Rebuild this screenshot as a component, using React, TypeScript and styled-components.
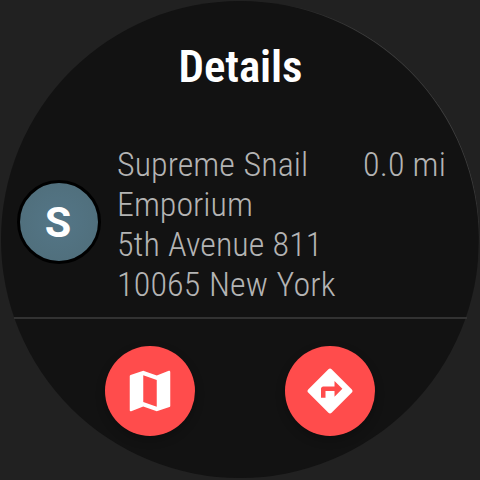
import React from "react";
import styled, { createGlobalStyle } from "styled-components";
import { MdMap } from "react-icons/md";

const GlobalStyle = createGlobalStyle`
  body { margin: 0; background: #212121; }
`;

const Screen = styled.div`
  width: 480px;
  height: 480px;
  box-sizing: border-box;
  padding: 1px;
  background: #212121;
  overflow: hidden;
  font-family: "Roboto Condensed", Roboto, sans-serif;
  font-stretch: 75%;
`;

const Face = styled.main`
  position: relative;
  width: 478px;
  height: 477px;
  border-radius: 50%;
  background: #121212;
  display: flex;
  flex-direction: column;

  /* faint highlight along the upper right of the bezel */
  &::after {
    content: "";
    position: absolute;
    inset: 0 -0.5px 0 0;
    border: 1px solid transparent;
    border-right-color: rgba(255, 255, 255, 0.12);
    border-radius: 50%;
    transform: rotate(-36deg);
    mask-image: radial-gradient(circle at 100% 50%, #000 90px, transparent 180px);
    pointer-events: none;
  }
`;

const Title = styled.h1`
  margin: 0;
  padding: 38px 0 0 1px;
  height: 103px;
  line-height: 56px;
  font-size: 45px;
  font-weight: 600;
  letter-spacing: -0.1px;
  text-align: center;
  color: #fff;
`;

const Place = styled.section`
  display: flex;
  height: 175px;
`;

const Divider = styled.hr`
  width: 453px;
  height: 2px;
  margin: 0 auto;
  border: 0;
  background: #323232;
`;

const Avatar = styled.div`
  width: 84px;
  height: 84px;
  margin: 38px 16.5px 0 15.5px;
  box-sizing: border-box;
  border: 3px solid #000;
  border-radius: 50%;
  background: radial-gradient(circle, #547687 0%, #4f6d79 100%);
  display: flex;
  align-items: center;
  justify-content: center;
  color: #fff;
  font-family: Roboto, sans-serif;
  font-stretch: 90%;
  font-size: 43px;
  font-weight: 700;
  text-indent: -1px;
`;

const Address = styled.div`
  flex: 1;
  padding-top: 2px;
  font-size: 34px;
  font-weight: 300;
  line-height: 40px;
  color: #b4b4b4;
  white-space: nowrap;
`;

const Line = styled.div<{ $tracking?: number; $gap?: number }>`
  letter-spacing: ${({ $tracking = 0 }) => $tracking}px;
  word-spacing: ${({ $gap = 0 }) => $gap}px;
`;

const Distance = styled(Address)`
  flex: none;
  margin-right: 33px;
  letter-spacing: 0.15px;
`;

const Actions = styled.nav`
  display: flex;
  justify-content: center;
  gap: 90px;
  padding-top: 27px;
`;

const ActionButton = styled.button`
  width: 90px;
  height: 90px;
  padding: 0;
  border: 0;
  border-radius: 50%;
  background: #ff4c4c;
  color: #fff;
  box-shadow: 0 4px 10px rgba(0, 0, 0, 0.25);
  display: flex;
  align-items: center;
  justify-content: center;
`;

const DirectionsIcon = () => (
  <svg width="54" height="54" viewBox="0 0 24 24" fill="currentColor">
    <path d="M21.71 11.29l-9-9c-.39-.39-1.02-.39-1.41 0l-9 9c-.39.39-.39 1.02 0 1.41l9 9c.39.39 1.02.39 1.41 0l9-9c.39-.38.39-1.01 0-1.41zM14 14.5V12h-4v3H8v-4c0-.55.45-1 1-1h5V7.5l3.5 3.5-3.5 3.5z" />
  </svg>
);

export default function App() {
  return (
    <Screen>
      <GlobalStyle />
      <Face>
        <Title>Details</Title>
        <Place>
          <Avatar>S</Avatar>
          <Address>
            <Line $tracking={0.05} $gap={1}>Supreme Snail</Line>
            <Line>Emporium</Line>
            <Line $tracking={0.05} $gap={0.5}>5th Avenue 811</Line>
            <Line $tracking={0.17} $gap={0.6}>10065 New York</Line>
          </Address>
          <Distance>0.0 mi</Distance>
        </Place>
        <Divider />
        <Actions>
          <ActionButton aria-label="Show map"><MdMap size={54} /></ActionButton>
          <ActionButton aria-label="Directions"><DirectionsIcon /></ActionButton>
        </Actions>
      </Face>
    </Screen>
  );
}
